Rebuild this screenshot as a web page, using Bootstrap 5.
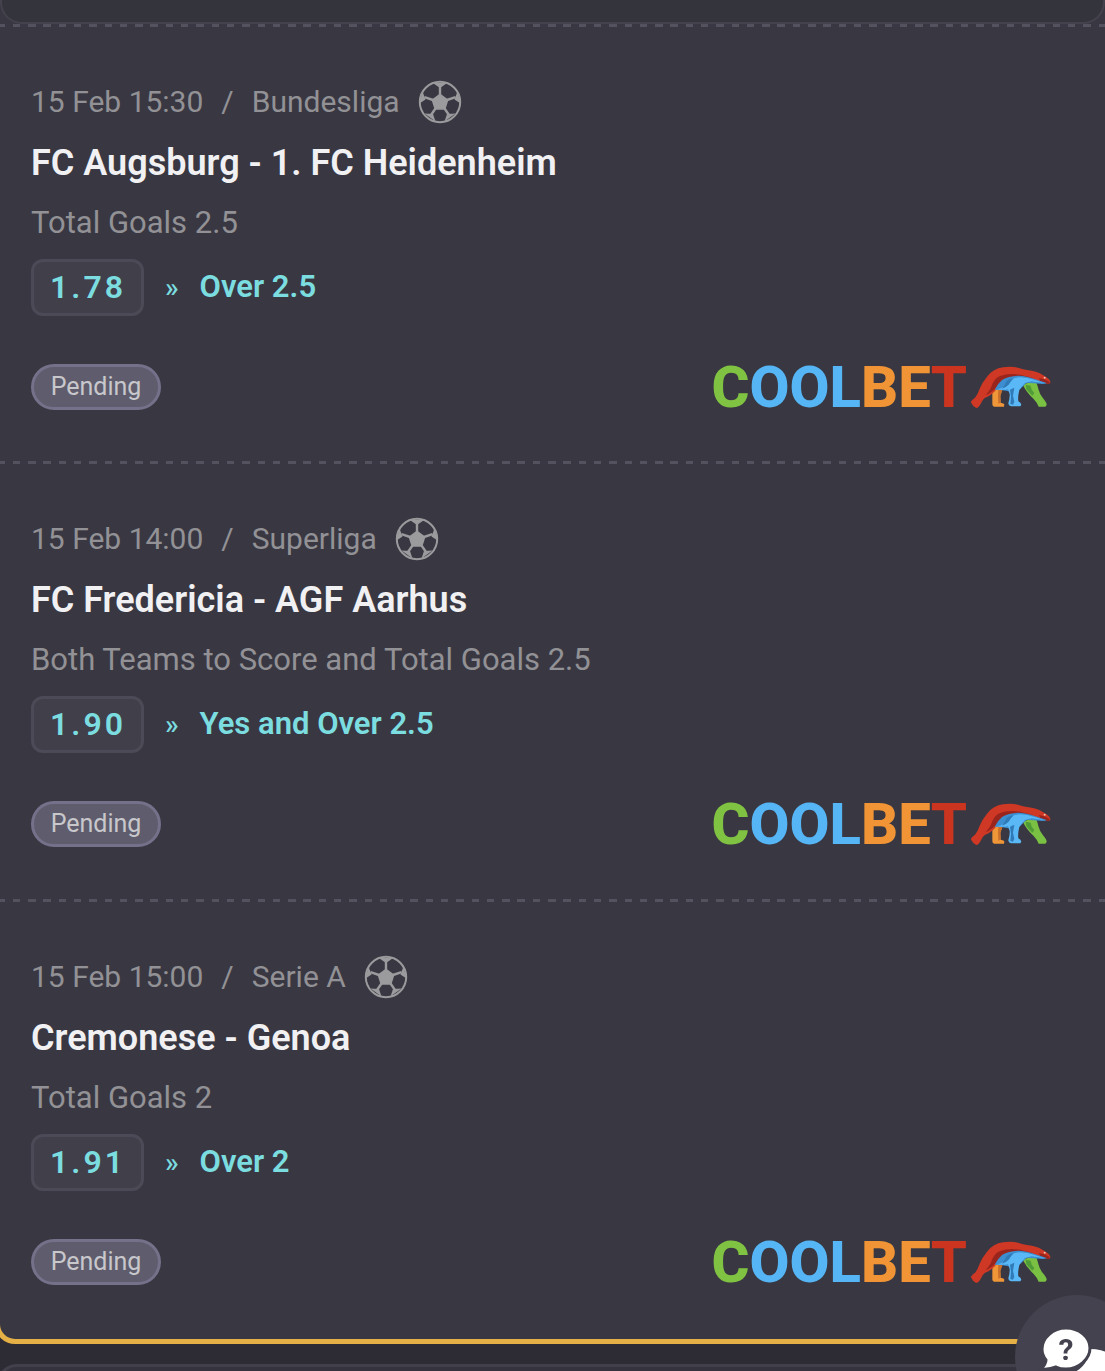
<!DOCTYPE html>
<html lang="en">
<head>
<meta charset="utf-8">
<meta name="viewport" content="width=device-width, initial-scale=1">
<title>Bet slip</title>
<link rel="stylesheet" href="https://cdn.jsdelivr.net/npm/bootstrap@5.3.0/dist/css/bootstrap.min.css">
<style>
body{background:#2d2c35;color:#929195;font-family:Roboto,"Liberation Sans",sans-serif;overflow-x:hidden}
.page{overflow:hidden}
.slip{background:#393842;border:5px solid #e5b046;border-top:0;border-radius:0 0 20px 20px;margin:0 -5px 20px}
.slip-top{height:24px}
.slip-box{height:24px;background:#34343d;border:2px solid #43424d;border-top:0;border-radius:0 0 22px 22px}
.leg{height:438px;padding:0 54px 0 31px}
.leg:first-of-type{height:437px}
.leg:last-of-type{height:440px}
.leg::before{content:"";display:block;height:3px;margin:0 -54px 52px -31px;background:repeating-linear-gradient(90deg,#53525e 0 .45%,transparent .45% 1.16%,#53525e 1.16% 1.384%)}
.leg-meta{height:46px;font-size:30px;line-height:46px}
.slash{margin:0 18px}
.ball{width:44px;height:44px;margin-left:18px}
.leg-title{font-size:36px;line-height:44px;font-weight:600;color:#f1f1f3;margin:16px 0}
.leg-market{font-size:31px;line-height:44px;margin:0 0 14px}
.odds{height:57px;width:113px;border:3px solid #4b4a56;border-radius:12px;background:#41404a;font-size:32px;line-height:50px;font-weight:600;letter-spacing:3px;color:#7cdde0;padding:0 0 0 16px}
.pick{font-size:31px;font-weight:600;color:#7cdde0}
.arrows{font-size:28px;line-height:42px;font-weight:500;color:#7cdde0;margin:0 21px}
.leg-foot{margin-top:48px}
.state{height:46px;width:130px;border:3px solid #75718a;border-radius:23px;background:#5f5d6d;color:#c8c7cb;font-size:25px;line-height:39px;font-weight:400}
.brand{font-size:58px;line-height:46px;font-weight:800;text-decoration:none}
.c-green{color:#80c342}.c-blue{color:#55b5f5}.c-orange{color:#f09435}.c-red{color:#cb3520}
.bear{width:80px;height:42px;margin-left:4px}
.next-slip{height:60px;background:#35343e;border:3px solid #41404b;border-radius:20px;margin:0 -3px -53px}
.chat-btn{position:fixed;right:-34px;bottom:-48px;width:124px;height:124px;border:0;border-radius:50%;background:#43424e;padding:0}
.chat-btn text{font:700 30px Roboto,sans-serif}
</style>
<script src="https://cdn.jsdelivr.net/npm/bootstrap@5.3.0/dist/js/bootstrap.bundle.min.js"></script>
</head>
<body>
<svg width="0" height="0" class="position-absolute" aria-hidden="true">
<defs>
<symbol id="football" viewBox="0 0 44 44">
<circle cx="22" cy="22" r="20.2" fill="none" stroke="#9b9a9d" stroke-width="2"/>
<path fill="#9b9a9d" d="M22 13.500l8.500 6.200-3.200 10h-10.600l-3.200-10zM14.500 2.800h15L22 8zM39.500 11.500l3 12-6-4zM37.500 33.500l-11 8 2.500-7.500zM6.500 33.500l11 8-2.500-7.500zM4.500 11.500l-3 12 6-4z"/>
<path fill="none" stroke="#9b9a9d" stroke-width="2.400" d="M22 5v10M29 20l8.500-2.800M26.500 28.500l5.200 7.500M17.500 28.500L12.300 36M15 20l-8.500-2.800"/>
</symbol>
<symbol id="bear" viewBox="36 25 240 126">
<path fill="#ef9638" d="M100 95l32-5-8 25 1 20q11 2 11 6l-1 6h-30q-6-3-5-9z"/>
<path fill="#c96f2b" d="M118 95l14-3-8 22 1 21-7 3-1-22z"/>
<path fill="#79c043" d="M192 80l37-10q5 6 9 24 4 16 14 28 12 14 11 20l-4 5h-20q-3-10-15-23-22-21-31-40z"/>
<path fill="#509b38" d="M200 81l15 3 3 12 8 10-6 8-18-19z"/>
<path fill="#cf3824" d="M37 131q3-6 11-11 8-9 14-27 8-19 22-36 19-24 48-28 29-5 50 3 9 4 22 5 30 3 46 14 20 10 23 19 4 6-3 8-15 0-32-5-30-4-50-4l-60 10q-12 11-22 23-16 15-28 18-8 6-12 17-7 14-14 14-13-6-17-19z"/>
<path fill="#99251d" d="M80 112q16-17 20-33 9-19 24-24 22-9 60-4l40 11-60 4-42 12q-10 13-21 22-12 10-21 12zM240 61q20 3 33 13l-5 4-24-6z"/>
<path fill="#3c8ed0" d="M107 96q9-18 22-29 20-12 50-13 22 0 50 11l34 11q-6 5-20 2l-40-3-20 20-35 6-22-4z"/>
<path fill="#5bb8f7" d="M114 95q22-3 34-22 10-13 34-14 24 1 45 8l31 10-40-6-20 5q-11 11-17 21-5 20-3 34 8 4 9 10l-3 5h-28q-8-2-8-9 5-16 4-28-3-9-5-14-15 3-33 0z"/>
<path fill="#307bb7" d="M153 96l13-6-4 24 4 18-4 9-8-2 2-22zM143 70q10-8 21-8-9 9-15 19-10 10-20 12 8-10 14-23z"/>
<circle cx="257" cy="60" r="3" fill="#f2c3b4"/>
</symbol>
</defs>
</svg>
<main class="page">
<section class="slip">
<div class="slip-top"><div class="slip-box"></div></div>

<article class="leg">
<div class="leg-meta d-flex align-items-center"><time>15 Feb 15:30</time><span class="slash">/</span><span>Bundesliga</span><svg class="ball" role="img" aria-label="Football"><use href="#football"/></svg></div>
<h2 class="leg-title">FC Augsburg - 1. FC Heidenheim</h2>
<p class="leg-market">Total Goals 2.5</p>
<div class="d-flex align-items-center"><div class="odds">1.78</div><span class="arrows">»</span><span class="pick">Over 2.5</span></div>
<div class="leg-foot d-flex align-items-center justify-content-between"><span class="state text-center">Pending</span><a class="brand d-flex align-items-center" href="#" aria-label="Coolbet"><span class="c-green">C</span><span class="c-blue">OOL</span><span class="c-orange">BE</span><span class="c-red">T</span><svg class="bear"><use href="#bear"/></svg></a></div>
</article>

<article class="leg">
<div class="leg-meta d-flex align-items-center"><time>15 Feb 14:00</time><span class="slash">/</span><span>Superliga</span><svg class="ball" role="img" aria-label="Football"><use href="#football"/></svg></div>
<h2 class="leg-title">FC Fredericia - AGF Aarhus</h2>
<p class="leg-market">Both Teams to Score and Total Goals 2.5</p>
<div class="d-flex align-items-center"><div class="odds">1.90</div><span class="arrows">»</span><span class="pick">Yes and Over 2.5</span></div>
<div class="leg-foot d-flex align-items-center justify-content-between"><span class="state text-center">Pending</span><a class="brand d-flex align-items-center" href="#" aria-label="Coolbet"><span class="c-green">C</span><span class="c-blue">OOL</span><span class="c-orange">BE</span><span class="c-red">T</span><svg class="bear"><use href="#bear"/></svg></a></div>
</article>

<article class="leg">
<div class="leg-meta d-flex align-items-center"><time>15 Feb 15:00</time><span class="slash">/</span><span>Serie A</span><svg class="ball" role="img" aria-label="Football"><use href="#football"/></svg></div>
<h2 class="leg-title">Cremonese - Genoa</h2>
<p class="leg-market">Total Goals 2</p>
<div class="d-flex align-items-center"><div class="odds">1.91</div><span class="arrows">»</span><span class="pick">Over 2</span></div>
<div class="leg-foot d-flex align-items-center justify-content-between"><span class="state text-center">Pending</span><a class="brand d-flex align-items-center" href="#" aria-label="Coolbet"><span class="c-green">C</span><span class="c-blue">OOL</span><span class="c-orange">BE</span><span class="c-red">T</span><svg class="bear"><use href="#bear"/></svg></a></div>
</article>
</section>
<section class="next-slip"></section>
</main>
<button class="chat-btn" type="button" aria-label="Help chat">
<svg width="124" height="124" viewBox="0 0 124 124">
<path fill="#fff" d="M52 80q20-5 23-26 24 0 30 20v40H52z"/>
<path fill="#fff" stroke="#43424e" stroke-width="3" d="M51 33c13 0 24 9 24 20s-11 21-24 21q-6 0-10-2-7 3-15 2 5-5 5-9-4-5-4-11c0-11 11-21 24-21z"/>
<text x="51" y="65" text-anchor="middle" fill="#43424e">?</text>
</svg>
</button>
</body>
</html>
